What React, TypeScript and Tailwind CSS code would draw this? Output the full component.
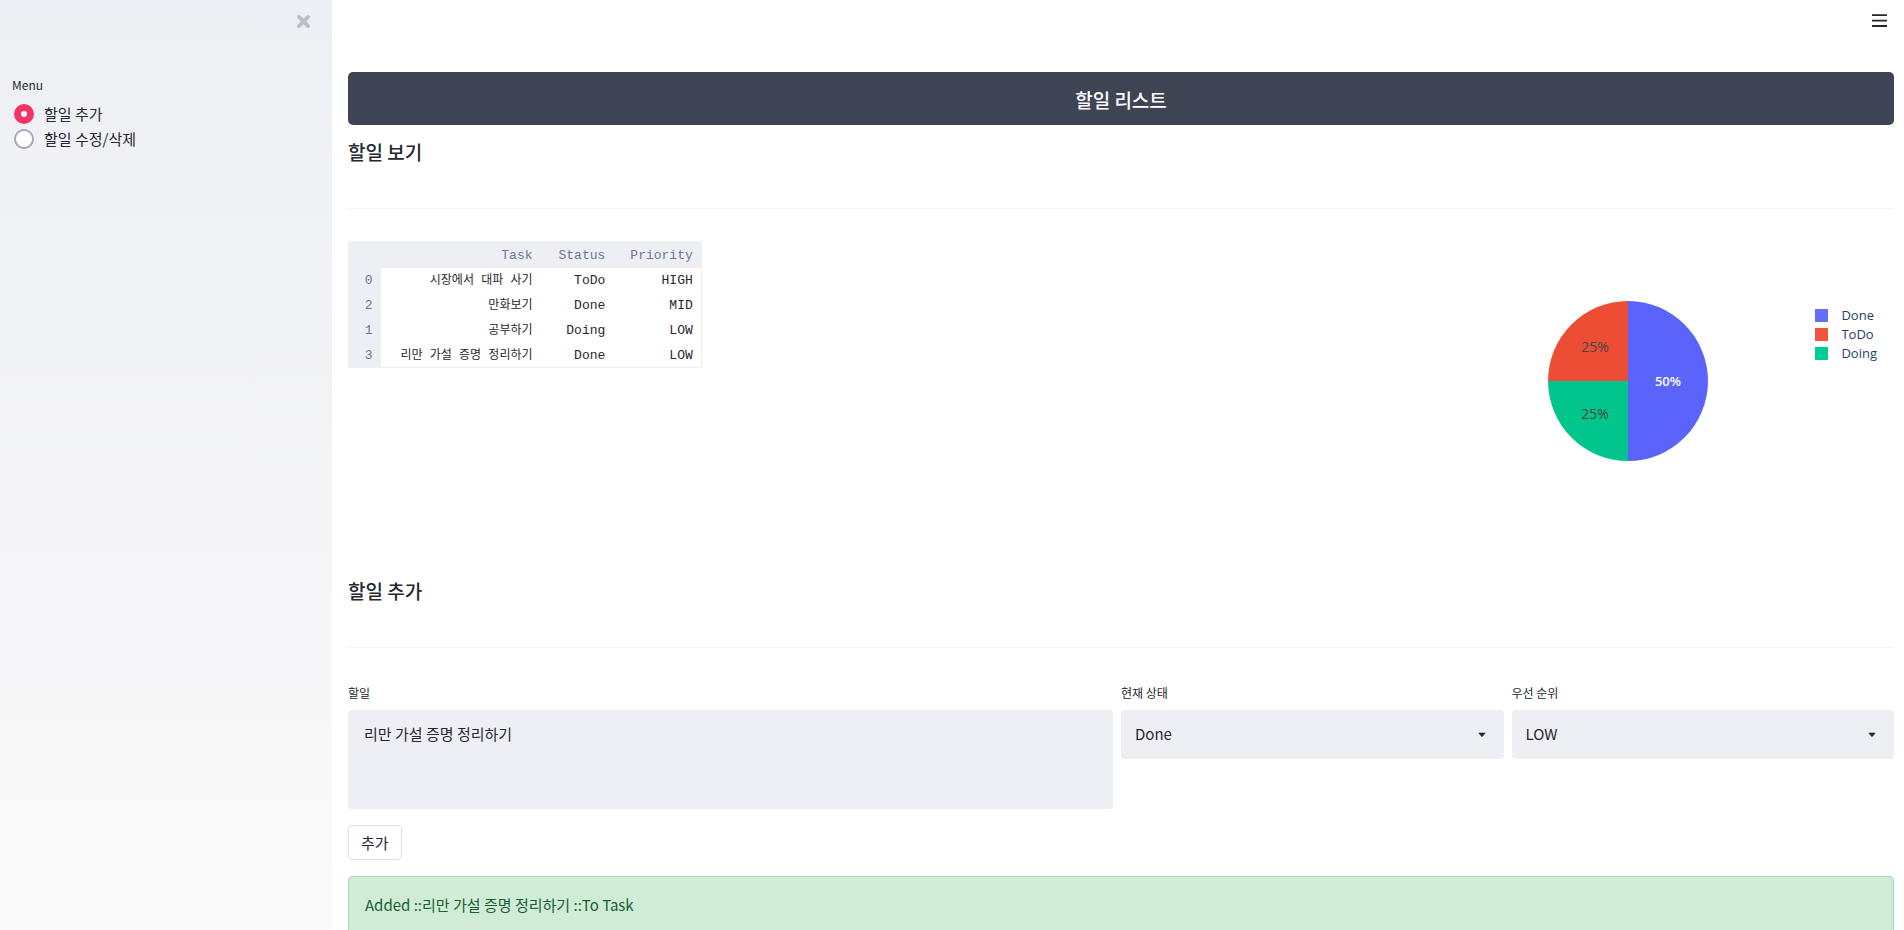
import { useState } from "react";

type Row = { id: number; task: string; status: string; priority: string };

const rows: Row[] = [
  { id: 0, task: "시장에서 대파 사기", status: "ToDo", priority: "HIGH" },
  { id: 2, task: "만화보기", status: "Done", priority: "MID" },
  { id: 1, task: "공부하기", status: "Doing", priority: "LOW" },
  { id: 3, task: "리만 가설 증명 정리하기", status: "Done", priority: "LOW" },
];

const menu = ["할일 추가", "할일 수정/삭제"];

const legend = [
  { name: "Done", swatch: "bg-[#636efa]" },
  { name: "ToDo", swatch: "bg-[#ef553b]" },
  { name: "Doing", swatch: "bg-[#00cc96]" },
];

function Sidebar() {
  const [active, setActive] = useState(menu[0]);
  return (
    <aside className="flex w-[332px] shrink-0 flex-col bg-linear-to-b from-[#eeeff4] to-[#fafafa]">
      <div className="flex h-[72px] items-start justify-end pt-[14px] pr-[21px]">
        <button type="button" aria-label="Close sidebar" className="text-[#bebfc4]">
          <svg width="15" height="15" viewBox="0 0 15 15" fill="none" stroke="currentColor" strokeWidth="3.8" strokeLinecap="round">
            <path d="M2.9 2.9l9.2 9.2M12.1 2.9l-9.2 9.2" />
          </svg>
        </button>
      </div>
      <fieldset className="px-3">
        <legend className="mb-[3px] text-[12px] leading-[26px]">Menu</legend>
        <div className="flex flex-col px-[2px]">
          {menu.map((item) => (
            <label key={item} className="flex h-[25px] items-center gap-[10px] text-[15px] leading-6">
              <input
                type="radio"
                name="menu"
                checked={active === item}
                onChange={() => setActive(item)}
                className="size-5 appearance-none rounded-full border-2 border-[#a3a8b8] bg-white checked:border-[7px] checked:border-[#f63366]"
              />
              {item}
            </label>
          ))}
        </div>
      </fieldset>
    </aside>
  );
}

function SectionTitle({ children }: { children: string }) {
  return (
    <>
      <h3 className="text-[19px] leading-7 font-medium">{children}</h3>
      <hr className="mt-[42px] mb-8 border-[#f2f3f7]" />
    </>
  );
}

function TaskTable() {
  return (
    <table className="border border-[#eeeff4] text-right font-['Liberation_Mono','Noto_Sans_CJK_KR',monospace] text-[13px] leading-4">
      <thead className="bg-[#eeeff4] text-[#6f7890]">
        <tr className="h-[26px]">
          <th className="w-8" aria-label="Index" />
          <th className="pt-[2px] pr-[13px] pl-4 font-normal">Task</th>
          <th className="pt-[2px] pr-[13px] pl-[13px] font-normal">Status</th>
          <th className="pt-[2px] pr-2 pl-3 font-normal">Priority</th>
        </tr>
      </thead>
      <tbody>
        {rows.map((row) => (
          <tr key={row.id} className="h-[25px]">
            <th className="bg-[#eeeff4] pt-[2px] pr-2 font-normal text-[#6f7890]">{row.id}</th>
            <td className="pt-[2px] pr-[13px] pl-5 text-[12px]">{row.task}</td>
            <td className="pt-[2px] pr-[13px]">{row.status}</td>
            <td className="pt-[2px] pr-2">{row.priority}</td>
          </tr>
        ))}
      </tbody>
    </table>
  );
}

function StatusChart() {
  return (
    <div className="flex gap-[107px] pt-[60px] pr-[17px] font-['Open_Sans',sans-serif]">
      <svg width="160" height="160" viewBox="0 0 160 160" role="img" aria-label="Status share" fontSize="14" textAnchor="middle">
        <path d="M80 80V0a80 80 0 0 1 0 160z" fill="#5a64fa" />
        <path d="M80 80H0A80 80 0 0 1 80 0z" fill="#ee4d35" />
        <path d="M80 80v80A80 80 0 0 1 0 80z" fill="#00c68b" />
        <text x="120" y="85" fill="#fff" fontSize="13" fontWeight="600">50%</text>
        <text x="47" y="51" fill="#444">25%</text>
        <text x="47" y="118" fill="#444">25%</text>
      </svg>
      <ul className="flex flex-col pt-[5px] text-[13px] leading-[19px] text-[#2a3f5f]">
        {legend.map((entry) => (
          <li key={entry.name} className="flex items-center gap-[13px]">
            <span className={`size-[13px] ${entry.swatch}`} />
            {entry.name}
          </li>
        ))}
      </ul>
    </div>
  );
}

function SelectField({ id, label, options, initial }: { id: string; label: string; options: string[]; initial: string }) {
  return (
    <div className="flex flex-col gap-1">
      <label htmlFor={id} className="text-[12px] leading-[26px]">{label}</label>
      <div className="relative">
        <select id={id} defaultValue={initial} className="h-[49px] w-full appearance-none rounded bg-[#eeeff4] px-[14px] text-[15px]">
          {options.map((option) => (
            <option key={option}>{option}</option>
          ))}
        </select>
        <svg className="pointer-events-none absolute top-[22px] right-[18px]" width="8" height="6" viewBox="0 0 8 6">
          <path d="M0.8 1h6.4L4.5 4.3a.7.7 0 0 1-1 0z" fill="#262730" stroke="#262730" strokeWidth="0.6" strokeLinejoin="round" />
        </svg>
      </div>
    </div>
  );
}

export default function App() {
  return (
    <div className="flex h-screen bg-white font-['Noto_Sans_CJK_KR',sans-serif] text-[#262730]">
      <Sidebar />
      <main className="min-w-0 flex-1 overflow-y-auto pr-[10px] pb-10 pl-4 [scrollbar-width:none]">
        <header className="flex h-[72px] items-start justify-end pt-3 pr-[6px]">
          <button type="button" aria-label="Main menu">
            <svg width="17" height="17" viewBox="0 0 17 17" stroke="#262730" strokeWidth="1.8">
              <path d="M1 3.2h15M1 8.6h15M1 14h15" />
            </svg>
          </button>
        </header>

        <h1 className="rounded-[5px] bg-[#3f4454] pt-[13px] pb-[11px] text-center text-[19px] leading-[29px] font-medium text-white">할일 리스트</h1>

        <section className="mt-[13px]">
          <SectionTitle>할일 보기</SectionTitle>
          <div className="flex min-h-[336px] items-start justify-between">
            <TaskTable />
            <StatusChart />
          </div>
        </section>

        <section>
          <SectionTitle>할일 추가</SectionTitle>
          <form onSubmit={(event) => event.preventDefault()}>
            <div className="grid grid-cols-[2fr_1fr_1fr] gap-2">
              <div className="flex flex-col gap-1">
                <label htmlFor="task" className="text-[12px] leading-[26px]">할일</label>
                <textarea
                  id="task"
                  defaultValue="리만 가설 증명 정리하기"
                  className="h-[99px] resize-none rounded bg-[#eeeff4] px-4 py-3 text-[15px] leading-6"
                />
              </div>
              <SelectField id="status" label="현재 상태" options={["ToDo", "Doing", "Done"]} initial="Done" />
              <SelectField id="priority" label="우선 순위" options={["LOW", "MID", "HIGH"]} initial="LOW" />
            </div>
            <button type="submit" className="mt-4 h-[35px] rounded border border-[#e0e1ea] bg-white px-3 text-[15px] leading-6">추가</button>
          </form>
          <div role="status" className="mt-4 rounded border border-[#a5d9b4] bg-[#d0ecd7] p-4 text-[15px] leading-6 text-[#176031]">
            Added ::리만 가설 증명 정리하기 ::To Task
          </div>
        </section>
      </main>
    </div>
  );
}
